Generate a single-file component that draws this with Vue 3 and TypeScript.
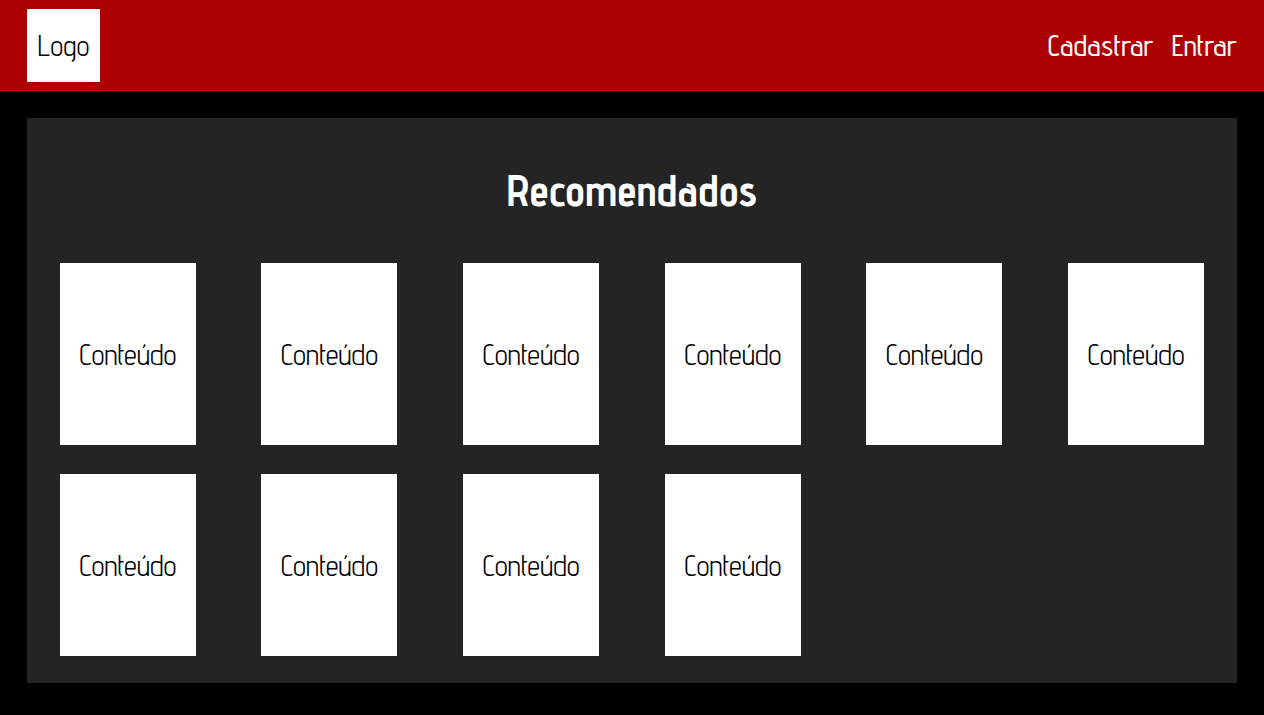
<script setup lang="ts">
interface Item {
  id: number
  title: string
}

const items: Item[] = Array.from({ length: 10 }, (_, i) => ({ id: i + 1, title: 'Conteúdo' }))
</script>

<template>
  <div class="page">
    <header class="topbar">
      <a class="logo" href="#">Logo</a>
      <nav class="nav">
        <a href="#cadastrar">Cadastrar</a>
        <a href="#entrar">Entrar</a>
      </nav>
    </header>
    <main class="panel">
      <h1>Recomendados</h1>
      <ul class="grid">
        <li v-for="item in items" :key="item.id" class="card">{{ item.title }}</li>
      </ul>
    </main>
  </div>
</template>

<style>
body {
  margin: 0;
  background: #000;
}
</style>

<style scoped>
.page {
  box-sizing: border-box;
  min-height: 100vh;
  background: #000;
  font-family: "Advent Pro", Lato, sans-serif;
  font-size: 29px;
  line-height: 33px;
  color: #000;
}
.topbar {
  display: flex;
  align-items: center;
  justify-content: space-between;
  padding: 9px 27px;
  background: #ad0000;
}
.logo {
  display: flex;
  align-items: center;
  justify-content: center;
  width: 73px;
  height: 73px;
  background: #fff;
  color: #000;
  text-decoration: none;
}
.nav {
  display: flex;
  gap: 18px;
  font-weight: 500;
}
.nav a {
  color: #fff;
  text-decoration: none;
}
.panel {
  margin: 27px;
  padding: 44px 0 27px;
  background: #242424;
}
h1 {
  margin: 0 0 45px;
  color: #fff;
  font-size: 44px;
  line-height: 56px;
  font-weight: 700;
  text-align: center;
}
.grid {
  display: grid;
  grid-template-columns: repeat(6, 1fr);
  row-gap: 29px;
  justify-items: center;
  margin: 0;
  padding: 0;
  list-style: none;
}
.card {
  display: flex;
  align-items: center;
  justify-content: center;
  width: 136px;
  height: 182px;
  background: #fff;
}
</style>
